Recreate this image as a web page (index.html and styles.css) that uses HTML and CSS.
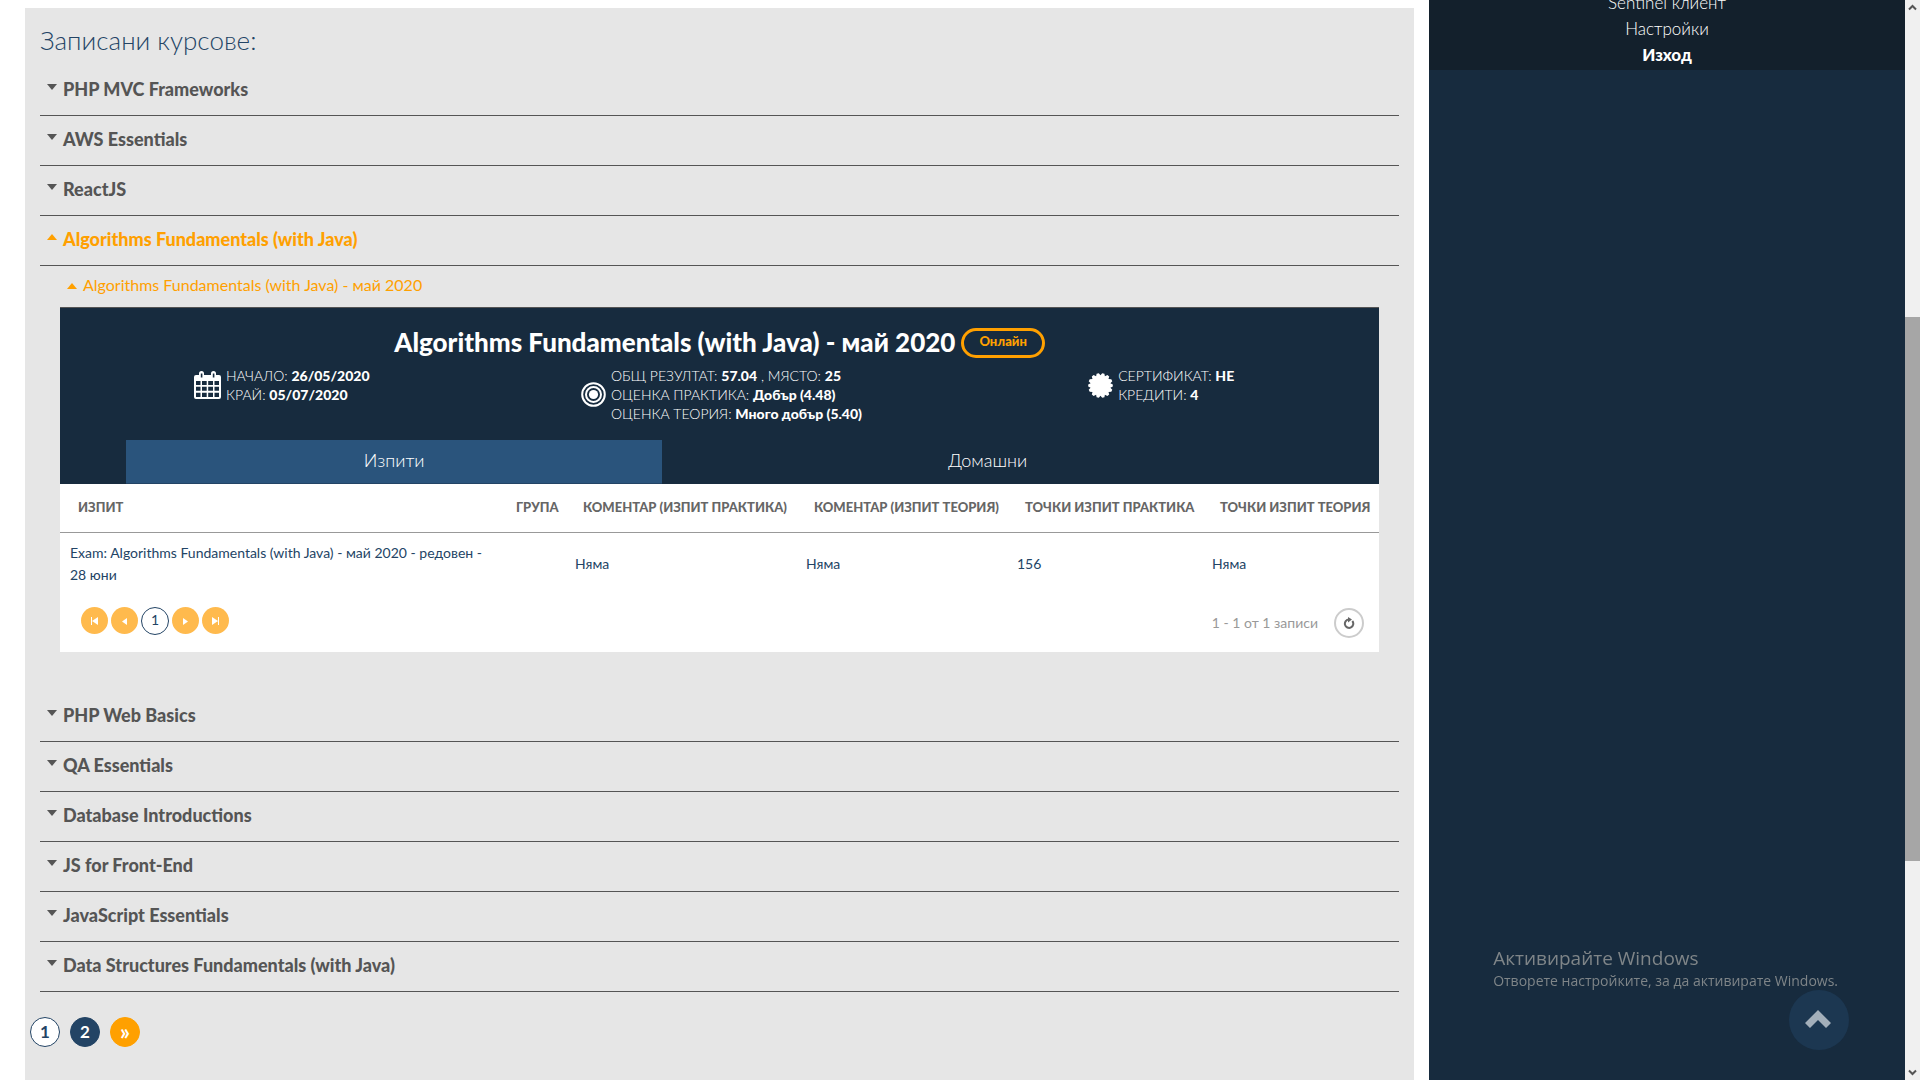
FILE: index.html
```html
<!DOCTYPE html>
<html lang="bg">
<head>
<meta charset="utf-8">
<title>Записани курсове</title>
<link rel="stylesheet" href="styles.css">
</head>
<body>
<div class="page">
  <main class="content">
    <h2 class="content-title">Записани курсове:</h2>
    <ul class="courses">
      <li><button class="course" type="button"><span class="caret"></span>PHP MVC Frameworks</button></li>
      <li><button class="course" type="button"><span class="caret"></span>AWS Essentials</button></li>
      <li><button class="course" type="button"><span class="caret"></span>ReactJS</button></li>
      <li>
        <button class="course open" type="button"><span class="caret"></span>Algorithms Fundamentals (with Java)</button>
        <div class="instance">
          <button class="instance-toggle" type="button"><span class="caret"></span>Algorithms Fundamentals (with Java) - май 2020</button>
          <section class="panel">
            <header class="panel-head">
              <div class="panel-title"><h3>Algorithms Fundamentals (with Java) - май 2020</h3><span class="badge">Онлайн</span></div>
              <div class="facts">
                <div class="fact">
                  <svg width="27" height="28" viewBox="0 0 27 28"><path fill="#fff" fill-rule="evenodd" d="M2 4h3V2.500a2.500 2.500 0 0 1 5 0V4h7V2.500a2.500 2.500 0 0 1 5 0V4h3q2 0 2 2v20q0 2-2 2H2q-2 0-2-2V6q0-2 2-2zM6.800 2.500v4h1.600v-4zM18.800 2.500v4h1.600v-4zM2 10v4h4.500v-4zM8 10v4h4.700v-4zM14.200 10v4H19v-4zM20.500 10v4H25v-4zM2 15.800v4h4.500v-4zM8 15.800v4h4.700v-4zM14.200 15.800v4H19v-4zM20.500 15.800v4H25v-4zM2 21.800V26h4.500v-4.200zM8 21.800V26h4.700v-4.200zM14.200 21.800V26H19v-4.200zM20.500 21.800V26H25v-4.200z"/></svg>
                  <p>НАЧАЛО: <strong>26/05/2020</strong><br>КРАЙ: <strong>05/07/2020</strong></p>
                </div>
                <div class="fact">
                  <svg width="25" height="25" viewBox="0 0 25 25"><g fill="none" stroke="#fff" stroke-width="2"><circle cx="12.500" cy="12.500" r="11.300"/><circle cx="12.500" cy="12.500" r="7.500"/></g><circle cx="12.500" cy="12.500" r="4.600" fill="#fff"/></svg>
                  <p>ОБЩ РЕЗУЛТАТ: <strong>57.04</strong> , МЯСТО: <strong>25</strong><br>ОЦЕНКА ПРАКТИКА: <strong>Добър (4.48)</strong><br>ОЦЕНКА ТЕОРИЯ: <strong>Много добър (5.40)</strong></p>
                </div>
                <div class="fact">
                  <svg width="25" height="25" viewBox="-12.500 -12.500 25 25"><path fill="#fff" d="M-1.700-12.300 0-10.200 1.700-12.300 3.900-11.800 4.400-9.200 6.900-10.400 8.700-9 8-6.400 10.800-6.200 11.800-4.200 9.900-2.300 12.300-1.100V1.100L9.900 2.300 11.800 4.200 10.800 6.200 8 6.400 8.700 9 6.900 10.400 4.400 9.200 3.900 11.800 1.700 12.300 0 10.200-1.700 12.300-3.900 11.800-4.400 9.200-6.900 10.400-8.700 9-8 6.400-10.800 6.200-11.800 4.200-9.900 2.300-12.300 1.100V-1.100L-9.900-2.300-11.800-4.200-10.800-6.200-8-6.400-8.700-9-6.900-10.400-4.400-9.200-3.900-11.800z"/></svg>
                  <p>СЕРТИФИКАТ: <strong>НЕ</strong><br>КРЕДИТИ: <strong>4</strong></p>
                </div>
              </div>
              <div class="tabs">
                <button class="tab exams active" type="button">Изпити</button>
                <button class="tab homework" type="button">Домашни</button>
              </div>
            </header>
            <table class="grid">
              <colgroup><col><col class="c-group"><col class="c-comment"><col class="c-theory"><col class="c-points"><col class="c-last"></colgroup>
              <thead>
                <tr><th>ИЗПИТ</th><th>ГРУПА</th><th>КОМЕНТАР (ИЗПИТ ПРАКТИКА)</th><th>КОМЕНТАР (ИЗПИТ ТЕОРИЯ)</th><th>ТОЧКИ ИЗПИТ ПРАКТИКА</th><th>ТОЧКИ ИЗПИТ ТЕОРИЯ</th></tr>
              </thead>
              <tbody>
                <tr><td>Exam: Algorithms Fundamentals (with Java) - май 2020 - редовен - 28 юни</td><td></td><td>Няма</td><td>Няма</td><td>156</td><td>Няма</td></tr>
              </tbody>
            </table>
            <div class="grid-foot">
              <div class="pager">
                <button type="button" aria-label="Първа"><svg width="9" height="8" viewBox="0 0 9 8"><path fill="#fff" d="M1 0h1v8H1zM8 0v8L2 4z"/></svg></button>
                <button type="button" aria-label="Предишна"><svg width="9" height="8" viewBox="0 0 9 8"><path fill="#fff" d="M7 1v7L2 4.500z"/></svg></button>
                <button class="current" type="button">1</button>
                <button type="button" aria-label="Следваща"><svg width="9" height="8" viewBox="0 0 9 8"><path fill="#fff" d="M2 1v7l5-3.500z"/></svg></button>
                <button type="button" aria-label="Последна"><svg width="9" height="8" viewBox="0 0 9 8"><path fill="#fff" d="M7 0h1v8H7zM1 0v8l6-4z"/></svg></button>
              </div>
              <span class="records">1 - 1 от 1 записи</span>
              <button class="refresh" type="button" aria-label="Обнови"><svg width="12" height="12" viewBox="0 0 12 12"><path d="M9.300 4A4.200 4.200 0 1 1 6 2.500" fill="none" stroke="#666" stroke-width="2"/><path d="M5 0 9 2.500 5 5.500z" fill="#666"/></svg></button>
            </div>
          </section>
        </div>
      </li>
      <li><button class="course" type="button"><span class="caret"></span>PHP Web Basics</button></li>
      <li><button class="course" type="button"><span class="caret"></span>QA Essentials</button></li>
      <li><button class="course" type="button"><span class="caret"></span>Database Introductions</button></li>
      <li><button class="course" type="button"><span class="caret"></span>JS for Front-End</button></li>
      <li><button class="course" type="button"><span class="caret"></span>JavaScript Essentials</button></li>
      <li><button class="course" type="button"><span class="caret"></span>Data Structures Fundamentals (with Java)</button></li>
    </ul>
    <nav class="pages">
      <a class="current" href="#1">1</a>
      <a href="#2">2</a>
      <a class="next" href="#next">»</a>
    </nav>
  </main>
  <aside class="sidebar">
    <nav class="menu">
      <a href="#sentinel">Sentinel клиент</a>
      <a href="#settings">Настройки</a>
      <a class="logout" href="#logout">Изход</a>
    </nav>
  </aside>
  <div class="scrollbar">
    <svg width="9" height="7" viewBox="0 0 9 7"><path d="M1 5.500 4.500 2 8 5.500" fill="none" stroke="#555" stroke-width="2"/></svg>
    <div class="track"><div class="thumb"></div></div>
    <svg width="9" height="7" viewBox="0 0 9 7"><path d="M1 1.500 4.500 5 8 1.500" fill="none" stroke="#555" stroke-width="2"/></svg>
  </div>
</div>
<div class="activation">
  <p class="activation-title">Активирайте Windows</p>
  <p>Отворете настройките, за да активирате Windows.</p>
</div>
<button class="to-top" type="button" aria-label="Нагоре"><svg width="26" height="18" viewBox="0 0 26 18"><path fill="#a3afba" d="M13 0 26 13l-5 5-8-8-8 8-5-5z"/></svg></button>
</body>
</html>
```
FILE: styles.css
```css
* { box-sizing: border-box; }

body {
  margin: 0;
  background: #fff;
  color: #555;
  font-family: Lato, "Liberation Sans", sans-serif;
  overflow: hidden;
}

button { border: 0; padding: 0; background: none; color: inherit; font: inherit; }
a { color: inherit; text-decoration: none; }
h2, h3, p, ul { margin: 0; padding: 0; }
ul { list-style: none; }

.page { display: flex; height: 100vh; }

.content {
  flex: 1;
  min-width: 0;
  margin: 8px 15px 0 25px;
  padding: 14px 15px 0;
  background: #e6e6e6;
}

.content-title {
  margin-bottom: 8px;
  color: #234465;
  font-size: 26px;
  font-weight: 300;
  line-height: 36px;
}

.course {
  display: flex;
  align-items: center;
  gap: 6px;
  width: 100%;
  height: 50px;
  padding: 0 0 3px 7px;
  border-bottom: 1px solid #555;
  font-size: 18px;
  font-weight: 900;
  text-align: left;
}

.caret {
  margin-bottom: 4px;
  border: 5px solid transparent;
  border-top: 6px solid #555;
  border-bottom: 0;
}

.course.open, .instance-toggle { color: #ffa000; }
.open .caret, .instance-toggle .caret {
  border-top: 0;
  border-bottom: 6px solid #ffa000;
}

.instance { padding: 0 20px 40px; }

.instance-toggle {
  display: flex;
  align-items: center;
  gap: 6px;
  height: 41px;
  padding: 0 0 4px 7px;
  font-size: 16px;
}
.instance-toggle .caret { margin: 2px 0 0; }

.panel { border-top: 1px solid #555; background: #fff; }
.panel-head { padding-top: 20px; background: #172b3e; color: #fff; }

.panel-title {
  display: flex;
  align-items: center;
  justify-content: center;
  gap: 6px;
  height: 30px;
}
.panel-title h3 { padding-bottom: 2px; font-size: 26px; font-weight: 900; line-height: 30px; }

.badge {
  height: 30px;
  padding: 0 15px;
  border: 3px solid #ffa000;
  border-radius: 15px;
  color: #ffa000;
  font-size: 13px;
  font-weight: 900;
  line-height: 21px;
}

.facts {
  display: grid;
  grid-template-columns: repeat(3, 1fr);
  column-gap: 4px;
  align-items: start;
  padding: 8px 0 17px 4px;
  font-size: 14px;
  font-weight: 300;
  line-height: 19px;
}
.fact { display: flex; align-items: center; justify-content: center; gap: 5px; }
.fact strong { font-weight: 900; }

.tabs { display: flex; margin: 0 5%; }
.tab {
  height: 44px;
  padding-bottom: 4px;
  border-bottom: 1px solid #172b3e;
  font-size: 18px;
  font-weight: 300;
}
.exams { flex: 536; }
.homework { flex: 650; }
.tab.active { border-color: #234465; background: #2a547c; }

.grid { width: 100%; border-collapse: collapse; table-layout: fixed; text-align: left; }
.c-group { width: 67px; }
.c-comment { width: 231px; }
.c-theory { width: 211px; }
.c-points { width: 195px; }
.c-last { width: 177px; }
.grid th {
  height: 48px;
  padding: 0 0 1px 18px;
  border-bottom: 1px solid #999;
  color: #666;
  font-size: 13px;
  font-weight: 900;
  white-space: nowrap;
}
.grid td { padding: 9px 10px; color: #234465; font-size: 14px; line-height: 22px; }

.grid-foot { display: flex; align-items: center; height: 57px; padding: 0 15px 0 21px; }
.pager { display: flex; gap: 3px; margin-right: auto; padding-bottom: 4px; }
.pager button {
  display: flex;
  align-items: center;
  justify-content: center;
  width: 27px;
  height: 27px;
  border-radius: 50%;
  background: #ffba4d;
}
.pager .current {
  width: 28px;
  height: 28px;
  padding-bottom: 3px;
  border: 1px solid #234465;
  background: #fff;
  color: #234465;
  font-size: 14px;
}
.records { margin-right: 16px; padding-bottom: 2px; color: #999; font-size: 14px; }
.refresh {
  display: flex;
  align-items: center;
  justify-content: center;
  width: 30px;
  height: 30px;
  border: 2px solid #ccc;
  border-radius: 50%;
}

.pages { display: flex; gap: 10px; margin: 25px 0 0 -10px; }
.pages a {
  width: 30px;
  height: 30px;
  border: 1px solid #234465;
  border-radius: 50%;
  background: #234465;
  color: #fff;
  font-size: 17px;
  font-weight: 700;
  line-height: 27px;
  text-align: center;
}
.pages .current { background: #fff; color: #234465; }
.pages .next { border-color: #ffa000; background: #ffa000; font-size: 22px; }

.sidebar { width: 25%; max-width: 476px; background: #172b3e; }
.menu {
  display: flex;
  flex-direction: column;
  justify-content: flex-end;
  height: 70px;
  padding-bottom: 2px;
  background: #13202c;
  color: #fff;
  font-size: 17px;
  font-weight: 300;
  line-height: 26px;
  text-align: center;
  overflow: hidden;
}
.menu .logout { font-weight: 900; }

.scrollbar {
  display: flex;
  flex-direction: column;
  align-items: center;
  width: 15px;
  padding: 4px 0;
  background: #f0f0f0;
}
.track { flex: 1; width: 100%; padding: 306px 0 208px; }
.thumb { height: 100%; background: #a6a6a6; }

.activation {
  position: fixed;
  right: 82px;
  bottom: 89px;
  color: #7f8588;
  font-family: "Open Sans", "Noto Sans", sans-serif;
  font-size: 14px;
  line-height: 20px;
}
.activation-title { font-size: 19px; line-height: 26px; }

.to-top {
  position: fixed;
  right: 71px;
  bottom: 30px;
  display: flex;
  align-items: center;
  justify-content: center;
  width: 60px;
  height: 60px;
  padding: 0 3px 3px 0;
  border-radius: 50%;
  background: #1c3751;
}
```
